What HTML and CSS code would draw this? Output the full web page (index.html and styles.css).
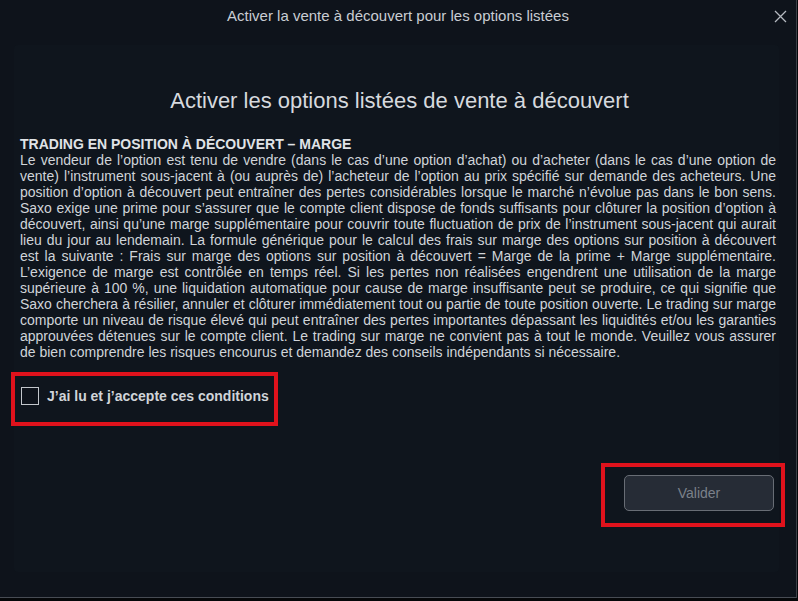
FILE: index.html
```html
<!DOCTYPE html>
<html lang="fr">
<head>
<meta charset="utf-8">
<title>Activer la vente à découvert pour les options listées</title>
<link rel="stylesheet" href="styles.css">
</head>
<body>
<div class="dialog">
  <header class="header">
    <span></span>
    <h2 class="header-title">Activer la vente à découvert pour les options listées</h2>
    <button class="close" aria-label="Fermer">
      <svg width="13" height="13" viewBox="0 0 13 13"><path d="M1 1L12 12M12 1L1 12" stroke="#b4b9c0" stroke-width="1.3" fill="none"/></svg>
    </button>
  </header>
  <main class="panel">
    <h1 class="title">Activer les options listées de vente à découvert</h1>
    <div class="terms">
      <h3 class="terms-heading">TRADING EN POSITION À DÉCOUVERT – MARGE</h3>
      <p class="terms-text">Le vendeur de l’option est tenu de vendre (dans le cas d’une option d’achat) ou d’acheter (dans le cas d’une option de vente) l’instrument sous-jacent à (ou auprès de) l’acheteur de l’option au prix spécifié sur demande des acheteurs. Une position d’option à découvert peut entraîner des pertes considérables lorsque le marché n’évolue pas dans le bon sens. Saxo exige une prime pour s’assurer que le compte client dispose de fonds suffisants pour clôturer la position d’option à découvert, ainsi qu’une marge supplémentaire pour couvrir toute fluctuation de prix de l’instrument sous-jacent qui aurait lieu du jour au lendemain. La formule générique pour le calcul des frais sur marge des options sur position à découvert est la suivante : Frais sur marge des options sur position à découvert = Marge de la prime + Marge supplémentaire. L’exigence de marge est contrôlée en temps réel. Si les pertes non réalisées engendrent une utilisation de la marge supérieure à 100 %, une liquidation automatique pour cause de marge insuffisante peut se produire, ce qui signifie que Saxo cherchera à résilier, annuler et clôturer immédiatement tout ou partie de toute position ouverte. Le trading sur marge comporte un niveau de risque élevé qui peut entraîner des pertes importantes dépassant les liquidités et/ou les garanties approuvées détenues sur le compte client. Le trading sur marge ne convient pas à tout le monde. Veuillez vous assurer de bien comprendre les risques encourus et demandez des conseils indépendants si nécessaire.</p>
    </div>
    <label class="accept">
      <span class="checkbox"></span>
      <span class="accept-text">J’ai lu et j’accepte ces conditions</span>
      <span class="mark mark-accept"></span>
    </label>
    <div class="actions">
      <button class="validate">Valider<span class="mark mark-validate"></span></button>
    </div>
  </main>
</div>
</body>
</html>
```

FILE: styles.css
```css
* { box-sizing: border-box; }
html, body { margin: 0; padding: 0; }
body {
  background: #050709;
  font-family: "Liberation Sans", Arial, sans-serif;
  width: 798px;
  height: 601px;
  overflow: hidden;
}
.dialog {
  width: 797px;
  height: 598px;
  background: #0e131b;
  border-right: 1px solid #3b4048;
  border-bottom: 1px solid #474c54;
  display: flex;
  flex-direction: column;
}
.header {
  height: 32px;
  display: grid;
  grid-template-columns: 1fr auto 1fr;
  align-items: center;
}
.header-title {
  margin: 0;
  font-weight: normal;
  font-size: 15px;
  color: #c9cdd3;
  line-height: 18px;
}
.close {
  justify-self: end;
  background: none;
  border: 0;
  padding: 0;
  margin-right: 9px;
  width: 14px;
  height: 14px;
  display: flex;
  align-items: center;
  justify-content: center;
}
.panel {
  margin: 13px 17px 0 14px;
  height: 527px;
  background: #0f151d;
  border-radius: 4px;
  padding: 43px 3px 0 6px;
  display: flex;
  flex-direction: column;
}
.title {
  margin: 0;
  text-align: center;
  font-weight: normal;
  font-size: 22px;
  line-height: 26px;
  color: #d6d9de;
  padding-left: 3px;
}
.terms {
  margin-top: 22px;
  color: #d0d4d9;
  font-size: 14px;
  line-height: 16px;
}
.terms-heading {
  margin: 0;
  font-size: 14px;
  line-height: 16px;
  font-weight: bold;
  color: #e0e3e7;
}
.terms-text {
  margin: 0;
  text-align: justify;
}
.accept {
  position: relative;
  margin-top: 27px;
  display: flex;
  align-items: center;
  gap: 8px;
  padding-left: 1px;
}
.checkbox {
  width: 18px;
  height: 18px;
  border: 1px solid #c3c7cc;
  background: #0e131b;
}
.accept-text {
  font-size: 14px;
  font-weight: bold;
  color: #d0d4d9;
}
.mark {
  position: absolute;
  border: 4px solid #e0121c;
  pointer-events: none;
}
.mark-accept {
  left: -9px;
  top: -15px;
  width: 267px;
  height: 54px;
}
.actions {
  margin-top: 70px;
  display: flex;
  justify-content: flex-end;
  padding-right: 2px;
}
.validate {
  position: relative;
  width: 150px;
  height: 36px;
  border-radius: 5px;
  border: 1px solid #686d75;
  background: #262c36;
  color: #7b818a;
  font-family: "Liberation Sans", Arial, sans-serif;
  font-size: 14px;
}
.mark-validate {
  left: -24px;
  top: -13px;
  width: 184px;
  height: 64px;
}
```
